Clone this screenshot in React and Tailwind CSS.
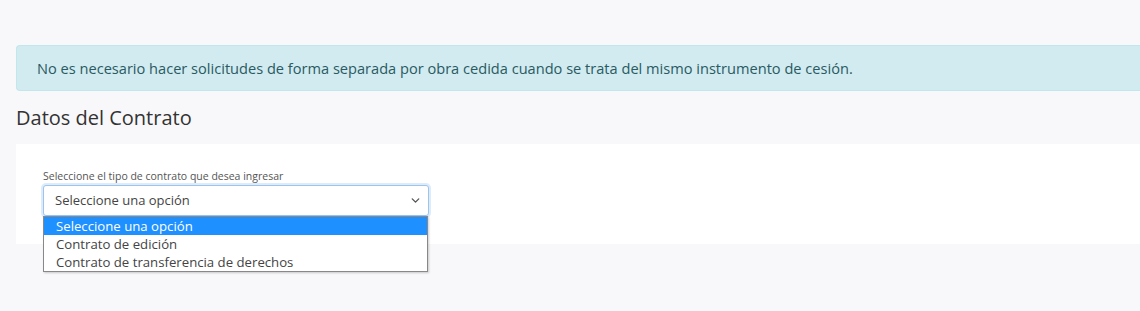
import { ChevronDown } from "lucide-react";

const opciones = ["Seleccione una opción", "Contrato de edición", "Contrato de transferencia de derechos"];

export default function App() {
  return <div className="min-h-screen bg-[#f8f8fa] pl-4 pt-[45px] font-['Open_Sans',sans-serif]">
    <div className="rounded-l-[4px] border border-r-0 border-[#c3e6ec] bg-[#d1ebf0] py-3 pl-5 text-[14.6px] leading-[20px] text-[#2a5a62]">
      No es necesario hacer solicitudes de forma separada por obra cedida cuando se trata del mismo instrumento de cesión.
    </div>
    <h2 className="mt-[14px] text-[20px] leading-[26px] text-[#333]">Datos del Contrato</h2>
    <div className="mt-[13px] h-[100px] bg-white pl-[27px] pt-[25px]">
      <label className="block text-[10.5px] leading-[14px] text-[#555]">Seleccione el tipo de contrato que desea ingresar</label>
      <div className="relative mt-[2px] w-[386px]">
        <div className="flex h-[31px] items-center justify-between rounded-[3px] border border-[#9cc4ef] bg-white pl-[11px] pr-[6px] text-[13px] text-[#444] shadow-[0_0_0_2px_rgba(160,200,240,0.35)]">
          <span>Seleccione una opción</span>
          <ChevronDown size={13} strokeWidth={2.5} className="text-[#555]" />
        </div>
        <ul className="absolute left-0 top-[31px] w-[385px] border border-[#888] bg-white text-[13.2px] leading-[18px] text-[#444] shadow-[1px_1px_2px_rgba(0,0,0,0.2)]">
          {opciones.map((o, i) => <li key={o} className={`pl-[12px] ${i === 0 ? "bg-[#1e90ff] text-white" : ""}`}>{o}</li>)}
        </ul>
      </div>
    </div>
  </div>;
}
